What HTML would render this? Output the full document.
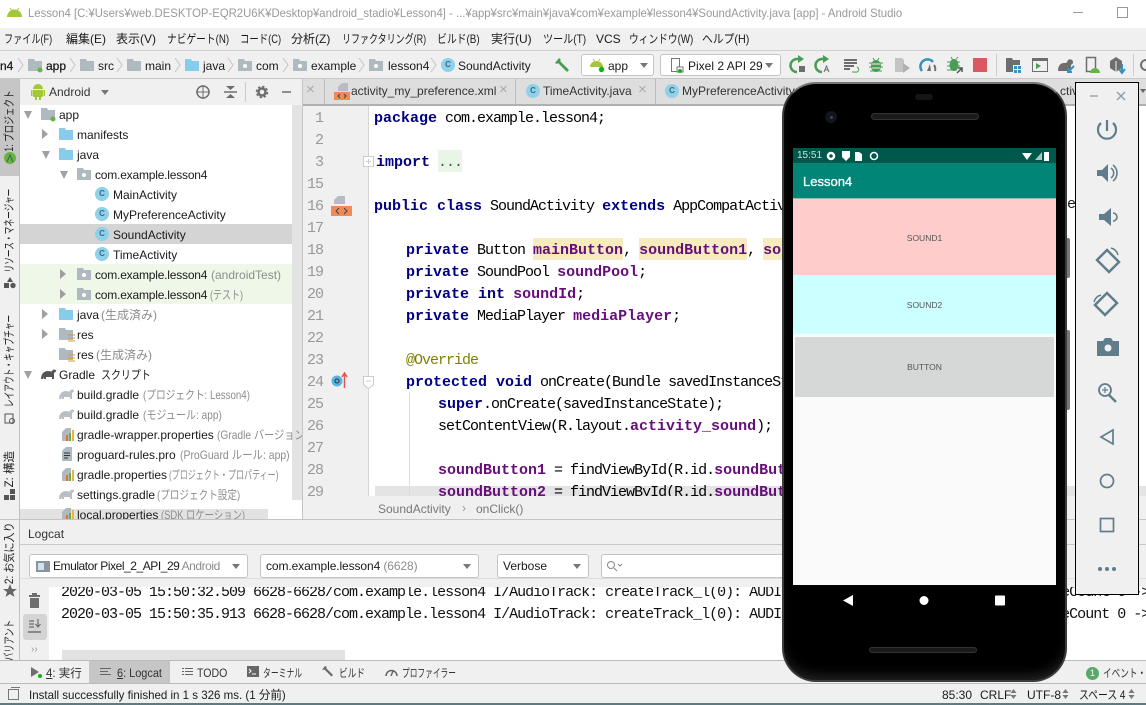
<!DOCTYPE html>
<html><head><meta charset="utf-8"><style>
html,body{margin:0;padding:0}
body{width:1146px;height:705px;overflow:hidden;position:relative;background:#f0f0f0;font:12px/16px "Liberation Sans","Noto Sans CJK JP",sans-serif;color:#1a1a1a}
.a,.t,svg.i,.b{position:absolute}
.t{white-space:nowrap;transform-origin:0 50%}
.g{color:#8c8c8c}
.c{position:absolute;width:14px;height:14px;border-radius:50%;background:#8fd0ea;color:#3d6a80;font:bold 8px/14px "Liberation Sans",sans-serif;text-align:center;font-style:normal}
.v{position:absolute;writing-mode:vertical-rl;text-orientation:sideways;white-space:nowrap;font-size:11.5px;line-height:14px;color:#222;left:3px}
.ln{position:absolute;width:30px;left:293px;text-align:right;font:15px/22px "Liberation Mono",monospace;letter-spacing:-1px;color:#999}
.cd{position:absolute;left:374px;white-space:pre;font:15px/22px "Liberation Mono",monospace;letter-spacing:-1px;color:#000}
.cd b{color:#000080;letter-spacing:0}
.cd u{text-decoration:none;color:#660e7a;font-weight:bold;letter-spacing:0}
.cd em{font-style:normal;background:#f6ebbc;display:inline-block;height:20px;box-shadow:0 -2px 0 #f6ebbc}
.lg{position:absolute;left:61px;white-space:pre;font:15px/22px "Liberation Mono",monospace;letter-spacing:-1px;color:#111}
.cb{position:absolute;background:#fff;border:1px solid #c4c4c4;border-radius:3px;box-sizing:border-box}
.tri{position:absolute;width:0;height:0;border-left:4px solid transparent;border-right:4px solid transparent;border-top:5px solid #777}
.m{top:31px}
.w{font-size:11.5px;color:#333;top:666px}
.sb{-webkit-text-stroke:.25px #1a1a1a}
</style></head><body>
<svg width="0" height="0" style="position:absolute"><defs>
<symbol id="fo" viewBox="0 0 14 12"><path d="M0 0h6l1 2h7v10H0z" fill="#aeb9c0"/></symbol>
<symbol id="fb" viewBox="0 0 14 12"><path d="M0 0h6l1 2h7v10H0z" fill="#87cdeb"/></symbol>
<symbol id="pk" viewBox="0 0 14 12"><path d="M0 0h6l1 2h7v10H0z" fill="#aeb9c0"/><circle cx="7" cy="7" r="2" fill="#fff"/></symbol>
<symbol id="el" viewBox="0 0 15 12"><path d="M0 11C0 6 3 3 7 3c2 0 3 1 4 0 1-2 4-2 4 0 0 1-1 1-2 2v6h-2V9H5v2H3V9l-1 2z"/></symbol>
<symbol id="pr" viewBox="0 0 14 14"><path d="M1 14V5l4-4h5v13z" fill="#aeb9c0"/><path d="M5 8h2v6H5z" fill="#e8702a"/><path d="M8 6h2v8H8z" fill="#62b543"/><path d="M11 3h2v11h-2z" fill="#f4af3d"/></symbol>
<symbol id="ud" viewBox="0 0 7 10"><path d="M3.500 0l3 4h-6zM3.500 10l3-4h-6z" fill="#777"/></symbol>
</defs></svg>

<!-- title -->
<div class="a" style="left:0;top:0;width:1146px;height:28px;background:#fff"></div>
<svg class="i" style="left:6px;top:7px" width="17" height="11" viewBox="0 0 17 11"><path d="M1 10a7.500 7.500 0 0 1 15 0z" fill="#a4c639"/><path d="M4 1l2 3M13 1l-2 3" stroke="#a4c639"/></svg>
<div class="t" style="left:28px;top:5px;color:#999;transform:scaleX(.944)">Lesson4 [C:¥Users¥web.DESKTOP-EQR2U6K¥Desktop¥android_stadio¥Lesson4] - ...¥app¥src¥main¥java¥com¥example¥lesson4¥SoundActivity.java [app] - Android Studio</div>
<div class="a" style="left:1073px;top:12px;width:10px;height:1px;background:#999"></div>
<div class="a" style="left:1117px;top:7px;width:9px;height:9px;border:1px solid #999"></div>

<!-- menu -->
<div class="t m" style="left:4px;transform:scaleX(.76)">ファイル(F)</div><div class="t m" style="left:66px">編集(E)</div><div class="t m" style="left:116px">表示(V)</div><div class="t m" style="left:167px;transform:scaleX(.81)">ナビゲート(N)</div><div class="t m" style="left:240px;transform:scaleX(.78)">コード(C)</div><div class="t m" style="left:291px">分析(Z)</div><div class="t m" style="left:342px;transform:scaleX(.75)">リファクタリング(R)</div><div class="t m" style="left:437px;transform:scaleX(.82)">ビルド(B)</div><div class="t m" style="left:491px">実行(U)</div><div class="t m" style="left:543px;transform:scaleX(.84)">ツール(T)</div><div class="t m" style="left:596px">VCS</div><div class="t m" style="left:629px;transform:scaleX(.81)">ウィンドウ(W)</div><div class="t m" style="left:702px;transform:scaleX(.9)">ヘルプ(H)</div>
<div class="a" style="left:0;top:50px;width:1146px;height:1px;background:#d0d0d0"></div>

<!-- breadcrumbs -->
<div class="t sb" style="left:0;top:58px">n4</div>
<svg class="i" style="left:28px;top:59px" width="14" height="12"><use href="#fo"/></svg><svg class="i" style="left:37px;top:67px" width="6" height="6"><circle cx="3" cy="3" r="2.500" fill="#62b543"/></svg>
<div class="t sb" style="left:46px;top:58px">app</div>
<svg class="i" style="left:80px;top:59px" width="14" height="12"><use href="#fo"/></svg><div class="t" style="left:98px;top:58px">src</div>
<svg class="i" style="left:127px;top:59px" width="14" height="12"><use href="#fo"/></svg><div class="t" style="left:145px;top:58px">main</div>
<svg class="i" style="left:185px;top:59px" width="14" height="12"><use href="#fb"/></svg><div class="t" style="left:203px;top:58px">java</div>
<svg class="i" style="left:238px;top:59px" width="14" height="12"><use href="#pk"/></svg><div class="t" style="left:256px;top:58px">com</div>
<svg class="i" style="left:293px;top:59px" width="14" height="12"><use href="#pk"/></svg><div class="t" style="left:311px;top:58px">example</div>
<svg class="i" style="left:369px;top:59px" width="14" height="12"><use href="#pk"/></svg><div class="t" style="left:388px;top:58px">lesson4</div>
<i class="c" style="left:441px;top:58px">C</i><div class="t" style="left:458px;top:58px">SoundActivity</div>
<svg class="i" style="left:17px;top:56px" width="420" height="18" fill="none" stroke="#c4c4c4"><path d="M1 2l5 7-5 7M53 2l5 7-5 7M100 2l5 7-5 7M158 2l5 7-5 7M211 2l5 7-5 7M266 2l5 7-5 7M342 2l5 7-5 7M414 2l5 7-5 7"/></svg>
<svg class="i" style="left:554px;top:57px" width="17" height="16"><path d="M1 6l4-5 2 2-1 1 9 9-2 2-9-9-1 1z" fill="#499c54"/></svg>
<div class="cb" style="left:581px;top:54px;width:73px;height:22px"></div>
<svg class="i" style="left:590px;top:58px" width="15" height="15"><path d="M0 9a6.500 6 0 0 1 13 0z" fill="#a4c639"/><path d="M3 1l1.500 2M10 1L8.500 3" stroke="#a4c639"/><circle cx="11.500" cy="11.500" r="2.700" fill="#0cb50c"/></svg>
<div class="t" style="left:608px;top:58px">app</div><div class="tri" style="left:640px;top:63px"></div>
<div class="cb" style="left:660px;top:54px;width:121px;height:22px"></div>
<svg class="i" style="left:670px;top:57px" width="14" height="17" fill="none" stroke="#777"><rect x="1.500" y="1.500" width="8" height="13"/><rect x="7" y="10" width="6" height="5" fill="#fff"/><circle cx="10" cy="14" r="2" fill="#0cb50c" stroke="none"/></svg>
<div class="t" style="left:688px;top:58px">Pixel 2 API 29</div><div class="tri" style="left:765px;top:63px"></div>

<!-- toolbar icons: each group centred on its reference x, y=65 -->
<svg class="i" style="left:780px;top:53px" width="366" height="24" fill="none">
<g transform="translate(18 12)"><path d="M-1 7a6.500 6.500 0 0 1 0-13h2" stroke="#499c54" stroke-width="2.500"/><path d="M0-10l6 4-6 4z" fill="#499c54"/><rect x="1" y="1" width="6" height="6" fill="#6e6e6e"/></g>
<g transform="translate(43 12)"><path d="M-1 7a6.500 6.500 0 0 1 0-13h2" stroke="#499c54" stroke-width="2.500"/><path d="M0-10l6 4-6 4z" fill="#499c54"/><path d="M1 7l2.500-6 2.500 6M2 5h3" stroke="#6e6e6e"/></g>
<g transform="translate(71 12)"><path d="M-7-5h13M-7-2h13M-7 1h10M-7 4h6" stroke="#6e6e6e" stroke-width="2"/><path d="M6 2a2.500 2.500 0 0 1-2 5H1" stroke="#499c54"/></g>
<g transform="translate(96 12)"><ellipse rx="5" ry="6" cy="1" fill="#499c54"/><path d="M-7-2h14M-7 2h14M-6 6h12M-3-7l1.500 2.500M3-7L1.500-4.500" stroke="#499c54"/><path d="M-4-1h8M-4 3h8" stroke="#f0f0f0"/></g>
<g transform="translate(122 12)"><path d="M-7-7h7l2 2v12h-9z" fill="#c4c4c4"/><path d="M1-2l7 5-7 5z" fill="#b0b0b0"/></g>
<g transform="translate(148 12)"><path d="M-6 6A7 7 0 0 1 5-3" stroke="#3592c4" stroke-width="2.500"/><path d="M7 6a7 7 0 0 0-1-6" stroke="#6e6e6e" stroke-width="2"/><path d="M-1 6l3-7 1 7z" fill="#6e6e6e"/></g>
<g transform="translate(175 12)"><ellipse cx="-1" rx="4.500" ry="6" fill="#499c54"/><path d="M-8-3h13M-8 1h13M-8 5h10M-4-8l1.500 2.500M3-8L1-5.500" stroke="#499c54"/><path d="M2 8l5-5M3 3h4v4" stroke="#555" stroke-width="1.500"/></g>
<rect x="193" y="5" width="14" height="14" fill="#db5860"/>
<path d="M216.500 1v22" stroke="#ccc"/>
<g transform="translate(233 12)"><path d="M-7-7h6l1 2h7v12H-7z" fill="#6e6e6e"/><rect x="0" y="0" width="9" height="9" fill="#f0f0f0"/><path d="M1 1h3v3H1zM5 1h3v3H5zM1 5h3v3H1zM5 5h3v3H5z" fill="#3592c4"/></g>
<g transform="translate(260 12)"><rect x="-7.500" y="-6.500" width="15" height="13" stroke="#6e6e6e"/><path d="M-8-7H8v3H-8z" fill="#6e6e6e"/><path d="M-4-2l5 3-5 3z" fill="#499c54"/></g>
<g transform="translate(286 12)"><path d="M-8 6c0-6 3-8 6-8 2 0 3 0 4-3 1-1 5-1 5 2 0 2-1 2-2 3v6z" fill="#6e6e6e"/><path d="M8 1L2 7M2 3v4h4" stroke="#3592c4" stroke-width="2"/></g>
<g transform="translate(312 12)"><rect x="-5.500" y="-7.500" width="9" height="14" stroke="#6e6e6e" stroke-width="1.500"/><path d="M-2 8a5 5 0 0 1 10 0z" fill="#62b543"/></g>
<g transform="translate(337 12)"><path d="M-7-4l6-4 6 4v7l-6 4-6-4z" fill="#6e6e6e"/><path d="M-1-4V7" stroke="#f0f0f0"/><path d="M5-1v8M2 4l3 4 3-4" stroke="#3592c4" stroke-width="2"/></g>
<path d="M353.500 1v22" stroke="#ccc"/>
<circle cx="366" cy="12" r="5" stroke="#6e6e6e" stroke-width="2"/>
</svg>
<div class="a" style="left:0;top:78px;width:1146px;height:1px;background:#c8c8c8"></div>

<!-- left strip -->
<div class="a" style="left:0;top:79px;width:19px;height:97px;background:#c6c6c6"></div>
<div class="a" style="left:19px;top:79px;width:1px;height:581px;background:#c0c0c0"></div>
<div class="v" style="top:80px;transform:rotate(180deg) scaleY(.75)">1: プロジェクト</div>
<svg class="i" style="left:3px;top:151px" width="14" height="14"><circle cx="7" cy="7" r="6" fill="#62b543"/><path d="M4 11l3-7 3 7" stroke="#555" fill="none"/></svg>
<div class="v" style="top:168px;transform:rotate(180deg) scaleY(.67)">リソース・マネージャー</div>
<svg class="i" style="left:4px;top:277px" width="12" height="12" fill="#555"><path d="M6 0l3 5H3z"/><rect x="0" y="6" width="5" height="5"/><circle cx="9" cy="8.500" r="2.700"/></svg>
<div class="v" style="top:292px;transform:rotate(180deg) scaleY(.67)">レイアウト・キャプチャー</div>
<svg class="i" style="left:4px;top:413px" width="12" height="12" fill="none" stroke="#555"><rect x="1" y="1" width="8" height="9"/><circle cx="8" cy="8" r="2.500"/></svg>
<div class="v" style="top:451px;transform:rotate(180deg)">Z: 構造</div>
<svg class="i" style="left:4px;top:489px" width="12" height="12" fill="#555"><rect x="0" y="6" width="5" height="5"/><rect x="6" y="6" width="5" height="5"/><rect x="6" y="0" width="5" height="5"/></svg>
<div class="v" style="top:518px;transform:rotate(180deg) scaleY(.88)">2: お気に入り</div>
<svg class="i" style="left:3px;top:584px" width="14" height="13"><path d="M7 0l2 5h5l-4 3 1.500 5L7 10l-4.500 3L4 8 0 5h5z" fill="#666"/></svg>
<div class="v" style="top:612px;transform:rotate(180deg) scaleY(.72)">バリアント</div>
<div class="a" style="left:0;top:660px;width:20px;height:23px;background:#f0f0f0"></div>

<!-- project panel header -->
<div class="a" style="left:20px;top:79px;width:283px;height:26px;background:#f0f0f0"></div>
<svg class="i" style="left:31px;top:83px" width="14" height="17" fill="#a4c639"><path d="M2 6a5 5 0 0 1 10 0z"/><rect x="2" y="7" width="10" height="7" rx="1"/><rect x="0" y="7" width="1.500" height="6"/><rect x="12.500" y="7" width="1.500" height="6"/><rect x="4" y="14" width="2" height="3"/><rect x="8" y="14" width="2" height="3"/></svg>
<div class="t" style="left:49px;top:84px;color:#333">Android</div><div class="tri" style="left:101px;top:90px"></div>
<svg class="i" style="left:195px;top:83px" width="96" height="18" fill="none" stroke="#6e6e6e" stroke-width="1.500">
<circle cx="8" cy="9" r="6"/><path d="M8 2v14M1 9h14" stroke-width="1"/><path d="M29 9h13"/><path d="M31 3h9l-4.500 4zM31 15h9l-4.500-4z" fill="#6e6e6e" stroke="none"/>
<circle cx="67" cy="9" r="3.500" stroke-width="2.500"/><circle cx="67" cy="9" r="5.500" stroke-width="1.500" stroke-dasharray="2.500 1.800"/><path d="M87 9h12"/>
</svg>
<div class="a" style="left:245px;top:82px;width:1px;height:20px;background:#ccc"></div>

<!-- tree -->
<div class="a" style="left:20px;top:105px;width:282px;height:414px;background:#fff;overflow:hidden" id="tree">
<div class="a" style="left:0;top:119px;width:282px;height:20px;background:#d4d4d4"></div>
<div class="a" style="left:0;top:159px;width:282px;height:40px;background:#eff7e8"></div>
<div class="a" style="left:272px;top:0;width:10px;height:395px;background:#e3e3e3"></div>
<div class="a" style="left:0;top:404px;width:248px;height:10px;background:#e2e2e2"></div>
<svg class="i" style="left:0;top:0" width="60" height="300" fill="#a0a0a0"><path d="M4 6h8l-4 8zM22 24l6 5-6 5zM22 46h8l-4 8zM40 66h8l-4 8zM40 164l6 5-6 5zM40 184l6 5-6 5zM22 204l6 5-6 5zM22 224l6 5-6 5zM4 266h8l-4 8z"/></svg>
<svg class="i" style="left:21px;top:3px" width="14" height="12"><use href="#fo"/></svg><svg class="i" style="left:30px;top:11px" width="6" height="6"><circle cx="3" cy="3" r="2.500" fill="#62b543"/></svg><div class="t" style="left:39px;top:2px">app</div>
<svg class="i" style="left:39px;top:23px" width="14" height="12"><use href="#fb"/></svg><div class="t" style="left:57px;top:22px">manifests</div>
<svg class="i" style="left:39px;top:43px" width="14" height="12"><use href="#fb"/></svg><div class="t" style="left:57px;top:42px">java</div>
<svg class="i" style="left:57px;top:63px" width="14" height="12"><use href="#pk"/></svg><div class="t" style="left:75px;top:62px;letter-spacing:-.2px">com.example.lesson4</div>
<i class="c" style="left:75px;top:82px">C</i><div class="t" style="left:93px;top:82px">MainActivity</div>
<i class="c" style="left:75px;top:102px">C</i><div class="t" style="left:93px;top:102px">MyPreferenceActivity</div>
<i class="c" style="left:75px;top:122px">C</i><div class="t" style="left:93px;top:122px">SoundActivity</div>
<i class="c" style="left:75px;top:142px">C</i><div class="t" style="left:93px;top:142px">TimeActivity</div>
<svg class="i" style="left:57px;top:163px" width="14" height="12"><use href="#pk"/></svg><div class="t" style="left:75px;top:162px;letter-spacing:-.2px">com.example.lesson4</div><div class="t g" style="left:191px;top:162px">(androidTest)</div>
<svg class="i" style="left:57px;top:183px" width="14" height="12"><use href="#pk"/></svg><div class="t" style="left:75px;top:182px;letter-spacing:-.2px">com.example.lesson4</div><div class="t g" style="left:190px;top:182px;transform:scaleX(.75)">(テスト)</div>
<svg class="i" style="left:39px;top:203px" width="14" height="12"><use href="#fb"/></svg><div class="t" style="left:57px;top:202px">java</div><div class="t g" style="left:81px;top:202px">(生成済み)</div>
<svg class="i" style="left:39px;top:223px" width="14" height="12"><use href="#fo"/></svg><svg class="i" style="left:48px;top:229px" width="7" height="8"><path d="M0 1h7M0 4h7M0 7h7" stroke="#d49a3c"/></svg><div class="t" style="left:57px;top:222px">res</div>
<svg class="i" style="left:39px;top:243px" width="14" height="12"><use href="#fo"/></svg><svg class="i" style="left:48px;top:249px" width="7" height="8"><path d="M0 1h7M0 4h7M0 7h7" stroke="#d49a3c"/></svg><div class="t" style="left:57px;top:242px">res</div><div class="t g" style="left:76px;top:242px">(生成済み)</div>
<svg class="i" style="left:21px;top:263px;fill:#555" width="15" height="12"><use href="#el"/></svg><div class="t" style="left:39px;top:262px">Gradle</div><div class="t" style="left:81px;top:262px;transform:scaleX(.83)">スクリプト</div>
<svg class="i" style="left:39px;top:283px;fill:#b8c0c5" width="15" height="12"><use href="#el"/></svg><div class="t" style="left:57px;top:282px">build.gradle</div><div class="t g" style="left:123px;top:282px;transform:scaleX(.81)">(プロジェクト: Lesson4)</div>
<svg class="i" style="left:39px;top:303px;fill:#b8c0c5" width="15" height="12"><use href="#el"/></svg><div class="t" style="left:57px;top:302px">build.gradle</div><div class="t g" style="left:123px;top:302px;transform:scaleX(.84)">(モジュール: app)</div>
<svg class="i" style="left:41px;top:322px" width="14" height="14"><use href="#pr"/></svg><div class="t" style="left:57px;top:322px">gradle-wrapper.properties</div><div class="t g" style="left:197px;top:322px;transform:scaleX(.85)">(Gradle バージョン</div>
<svg class="i" style="left:41px;top:342px" width="12" height="14"><path d="M1 14V4l4-4h6v14z" fill="#aeb9c0"/><path d="M3 6h6M3 8.500h6M3 11h4" stroke="#333"/></svg><div class="t" style="left:57px;top:342px">proguard-rules.pro</div><div class="t g" style="left:160px;top:342px;transform:scaleX(.87)">(ProGuard ルール: app)</div>
<svg class="i" style="left:41px;top:362px" width="14" height="14"><use href="#pr"/></svg><div class="t" style="left:57px;top:362px">gradle.properties</div><div class="t g" style="left:149px;top:362px;transform:scaleX(.67)">(プロジェクト・プロパティー)</div>
<svg class="i" style="left:39px;top:383px;fill:#b8c0c5" width="15" height="12"><use href="#el"/></svg><div class="t" style="left:57px;top:382px">settings.gradle</div><div class="t g" style="left:137px;top:382px;transform:scaleX(.8)">(プロジェクト設定)</div>
<svg class="i" style="left:41px;top:402px" width="14" height="14"><use href="#pr"/></svg><div class="t" style="left:57px;top:402px">local.properties</div><div class="t g" style="left:141px;top:402px;transform:scaleX(.78)">(SDK ロケーション)</div>
</div>
<div class="a" style="left:302px;top:79px;width:1px;height:440px;background:#c4c4c4"></div>

<!-- tabs -->
<div class="a" style="left:303px;top:79px;width:843px;height:25px;background:#dedede"></div>
<div class="a" style="left:303px;top:104px;width:843px;height:2px;background:#b0b0b0"></div>
<div class="a" style="left:324px;top:79px;width:1px;height:25px;background:#bbb"></div><div class="a" style="left:515px;top:79px;width:1px;height:25px;background:#bbb"></div><div class="a" style="left:655px;top:79px;width:1px;height:25px;background:#bbb"></div>
<div class="t" style="left:306px;top:82px;color:#aaa;font-size:15px">×</div>
<svg class="i" style="left:334px;top:83px" width="16" height="18"><path d="M4 8V4l4-4h6v8z" fill="#b5bdc2"/><rect y="9" width="16" height="8" fill="#ee8b58"/><path d="M6 11l-2 2 2 2M10 11l2 2-2 2" stroke="#444" fill="none"/></svg>
<div class="t" style="left:351px;top:83px;color:#333">activity_my_preference.xml</div><div class="t" style="left:499px;top:82px;color:#aaa;font-size:15px">×</div>
<i class="c" style="left:526px;top:84px">C</i><div class="t" style="left:543px;top:83px;color:#333">TimeActivity.java</div><div class="t" style="left:638px;top:82px;color:#aaa;font-size:15px">×</div>
<i class="c" style="left:665px;top:84px">C</i><div class="t" style="left:682px;top:83px;color:#333">MyPreferenceActivity</div>
<div class="t" style="left:1060px;top:83px;color:#333">ctiv</div>
<div class="a" style="left:1140px;top:89px;border-left:3px solid transparent;border-right:3px solid transparent;border-top:4px solid #666"></div>

<!-- editor -->
<div class="a" style="left:303px;top:106px;width:65px;height:390px;background:#f0f0f0"></div>
<div class="a" style="left:368px;top:106px;width:1px;height:390px;background:#d4d4d4"></div>
<div class="a" style="left:369px;top:106px;width:777px;height:390px;background:#fff"></div>
<div class="a" style="left:375px;top:486px;width:771px;height:10px;background:#e4e4e4"></div>
<div class="a" style="left:409px;top:392px;width:1px;height:104px;background:#dcdcdc"></div>
<div class="a" style="top:108px;height:388px;overflow:hidden;left:0;width:1146px">
<div class="ln" style="top:0">1</div><div class="ln" style="top:22px">2</div><div class="ln" style="top:44px">3</div><div class="ln" style="top:66px">15</div><div class="ln" style="top:88px">16</div><div class="ln" style="top:110px">17</div><div class="ln" style="top:132px">18</div><div class="ln" style="top:154px">19</div><div class="ln" style="top:176px">20</div><div class="ln" style="top:198px">21</div><div class="ln" style="top:220px">22</div><div class="ln" style="top:242px">23</div><div class="ln" style="top:264px">24</div><div class="ln" style="top:286px">25</div><div class="ln" style="top:308px">26</div><div class="ln" style="top:330px">27</div><div class="ln" style="top:352px">28</div><div class="ln" style="top:374px">29</div>
<div class="cd" style="top:0"><b>package</b> com.example.lesson4;</div>
<div class="cd" style="top:44px;left:376px"><b>import</b> <span style="background:#e9f5e6;color:#555;display:inline-block;height:20px;box-shadow:0 -2px 0 #e9f5e6">...</span></div>
<div class="cd" style="top:88px"><b>public class</b> SoundActivity <b>extends</b> AppCompatActivity</div>
<div class="cd" style="top:132px">    <b>private</b> Button <em><u>mainButton</u></em>, <em><u>soundButton1</u></em>, <em><u>soundButton2</u></em></div>
<div class="cd" style="top:154px">    <b>private</b> SoundPool <u>soundPool</u>;</div>
<div class="cd" style="top:176px">    <b>private int</b> <u>soundId</u>;</div>
<div class="cd" style="top:198px">    <b>private</b> MediaPlayer <u>mediaPlayer</u>;</div>
<div class="cd" style="top:242px">    <span style="color:#808000">@Override</span></div>
<div class="cd" style="top:264px">    <b>protected void</b> onCreate(Bundle savedInstanceState) {</div>
<div class="cd" style="top:286px">        <b>super</b>.onCreate(savedInstanceState);</div>
<div class="cd" style="top:308px">        setContentView(R.layout.<u>activity_sound</u>);</div>
<div class="cd" style="top:352px">        <u>soundButton1</u> = findViewById(R.id.<u>soundButton1</u>);</div>
<div class="cd" style="top:374px">        <u>soundButton2</u> = findViewById(R.id.<u>soundButton2</u>);</div>
</div>
<svg class="i" style="left:363px;top:156px" width="12" height="12" fill="#fff" stroke="#ccc"><rect x=".5" y=".5" width="10" height="10"/><path d="M3 5.500h5M5.500 3v5"/></svg>
<svg class="i" style="left:363px;top:376px" width="12" height="14" fill="#fff" stroke="#ccc"><path d="M.5.5h10v8l-5 4-5-4z"/><path d="M3 5h5"/></svg>
<svg class="i" style="left:331px;top:195px" width="22" height="22"><path d="M3 9V5l4-4h7v8z" fill="#b5bdc2"/><rect y="11" width="21" height="10" fill="#ee8b58"/><path d="M8 13l-3 3 3 3M13 13l3 3-3 3" stroke="#444" fill="none"/></svg>
<svg class="i" style="left:331px;top:372px" width="17" height="17"><circle cx="6" cy="9" r="5.500" fill="#55b5e0"/><circle cx="6" cy="9" r="2" fill="none" stroke="#333"/><path d="M13.500 16V2M11 5l2.500-4 2.500 4" stroke="#e05555" fill="none" stroke-width="1.500"/></svg>

<!-- editor breadcrumb -->
<div class="a" style="left:303px;top:496px;width:843px;height:23px;background:#f0f0f0"></div>
<div class="t" style="left:378px;top:501px;color:#777">SoundActivity</div><div class="t" style="left:462px;top:500px;color:#999">›</div><div class="t" style="left:476px;top:501px;color:#777">onClick()</div>
<div class="a" style="left:0;top:519px;width:1146px;height:1px;background:#c4c4c4"></div>

<!-- logcat -->
<div class="t" style="left:28px;top:526px;color:#333">Logcat</div>
<div class="a" style="left:20px;top:544px;width:1126px;height:1px;background:#c8c8c8"></div>
<div class="cb" style="left:29px;top:554px;width:219px;height:24px"></div>
<svg class="i" style="left:36px;top:561px" width="14" height="11"><rect width="14" height="11" fill="#8a949a"/><rect x="2" y="2" width="6" height="7" fill="#cfe3ee"/></svg>
<div class="t" style="left:53px;top:558px;width:169px;overflow:hidden;letter-spacing:-.45px">Emulator Pixel_2_API_29 <span class="g">Android 10, API 29</span></div><div class="tri" style="left:232px;top:564px"></div>
<div class="cb" style="left:260px;top:554px;width:219px;height:24px"></div>
<div class="t" style="left:266px;top:558px;letter-spacing:-.1px">com.example.lesson4 <span class="g">(6628)</span></div><div class="tri" style="left:463px;top:564px"></div>
<div class="cb" style="left:497px;top:554px;width:92px;height:24px"></div>
<div class="t" style="left:503px;top:558px">Verbose</div><div class="tri" style="left:573px;top:564px"></div>
<div class="cb" style="left:601px;top:554px;width:250px;height:24px"></div>
<svg class="i" style="left:606px;top:560px" width="18" height="12" fill="none" stroke="#888"><circle cx="5" cy="5" r="3.500"/><path d="M8 8l3 3M12 4l2 2 2-2"/></svg>
<div class="a" style="left:20px;top:578px;width:1126px;height:1px;background:#ddd"></div>
<div class="a" style="left:49px;top:587px;width:1097px;height:73px;background:#fff;overflow:hidden">
<div class="lg" style="left:12px;top:-5px">2020-03-05 15:50:32.509 6628-6628/com.example.lesson4 I/AudioTrack: createTrack_l(0): AUDIO_OUTPUT_FLAG_FAST successful; frameCount 0 -&gt;</div>
<div class="lg" style="left:12px;top:17px">2020-03-05 15:50:35.913 6628-6628/com.example.lesson4 I/AudioTrack: createTrack_l(0): AUDIO_OUTPUT_FLAG_FAST successful; frameCount 0 -&gt;</div>
<div class="a" style="left:13px;top:63px;width:283px;height:10px;background:#e2e2e2"></div>
</div>
<svg class="i" style="left:28px;top:593px" width="14" height="16" fill="#6e6e6e"><rect x="1" y="2" width="11" height="2"/><rect x="4" y="0" width="5" height="2"/><path d="M2 5h9v10H2z"/></svg>
<div class="a" style="left:23px;top:614px;width:24px;height:26px;background:#d4d4d4;border-radius:3px"></div>
<svg class="i" style="left:28px;top:618px" width="14" height="16" fill="none" stroke="#6e6e6e"><path d="M0 14h13" stroke-width="1.500"/><path d="M10 1v8M7.500 6l2.500 3 2.500-3M1 3h5M1 6h5M1 9h5" stroke-width="1.200"/></svg>
<div class="t" style="left:31px;top:642px;color:#999;font-size:10px">››</div>

<!-- bottom tool bar -->
<div class="a" style="left:0;top:660px;width:1146px;height:1px;background:#bbb"></div>
<div class="a" style="left:89px;top:661px;width:81px;height:22px;background:#c6c6c6"></div>
<div class="a" style="left:0;top:683px;width:1146px;height:1px;background:#bbb"></div>
<svg class="i" style="left:30px;top:666px" width="15" height="13"><path d="M1 1l8 5-8 5z" fill="#6e6e6e"/><circle cx="10" cy="10" r="2" fill="#0cb50c"/></svg>
<div class="t w" style="left:46px"><u>4</u>: 実行</div>
<svg class="i" style="left:100px;top:667px" width="12" height="10" stroke="#666"><path d="M0 1.500h11M0 4.500h8M0 7.500h11"/></svg>
<div class="t w" style="left:117px;transform:scaleX(.95)"><u>6</u>: Logcat</div>
<svg class="i" style="left:182px;top:667px" width="11" height="10" stroke="#666"><path d="M0 1.500h2M3 1.500h8M0 4.500h2M3 4.500h8M0 7.500h2M3 7.500h8"/></svg>
<div class="t w" style="left:197px;transform:scaleX(.92)">TODO</div>
<svg class="i" style="left:247px;top:666px" width="12" height="11"><rect width="12" height="11" fill="#666"/><path d="M2 3l2 2-2 2M5 8h4" stroke="#fff" fill="none"/></svg>
<div class="t w" style="left:263px;transform:scaleX(.68)">ターミナル</div>
<svg class="i" style="left:322px;top:665px" width="13" height="12"><path d="M0 5l3-4 2 1-1 1 7 7-1.500 1.500-7-7z" fill="#666"/></svg>
<div class="t w" style="left:339px;transform:scaleX(.75)">ビルド</div>
<svg class="i" style="left:385px;top:667px" width="13" height="9" fill="none" stroke="#666" stroke-width="1.500"><path d="M1 9a5.500 5.500 0 0 1 11 0M6 9l2-5"/></svg>
<div class="t w" style="left:402px;transform:scaleX(.67)">プロファイラー</div>
<svg class="i" style="left:1086px;top:667px" width="13" height="13"><circle cx="6.500" cy="6.500" r="6.500" fill="#5aa86a"/></svg>
<div class="t" style="left:1090px;top:667px;color:#fff;font-size:9px;line-height:13px">1</div>
<div class="t w" style="left:1103px;transform:scaleX(.75)">イベント・ログ</div>

<!-- status -->
<div class="a" style="left:8px;top:689px;width:9px;height:9px;border:1px solid #777"></div><div class="a" style="left:11px;top:687px;width:9px;height:1px;background:#777"></div>
<div class="t" style="left:29px;top:687px;transform:scaleX(.96)">Install successfully finished in 1 s 326 ms. (1 分前)</div>
<div class="t" style="left:942px;top:687px">85:30</div>
<div class="t" style="left:980px;top:687px">CRLF</div><svg class="i" style="left:1010px;top:689px" width="7" height="10"><use href="#ud"/></svg>
<div class="t" style="left:1027px;top:687px">UTF-8</div><svg class="i" style="left:1062px;top:689px" width="7" height="10"><use href="#ud"/></svg>
<div class="t" style="left:1079px;top:687px;transform:scaleX(.82)">スペース 4</div><svg class="i" style="left:1128px;top:689px" width="7" height="10"><use href="#ud"/></svg>
<div class="a" style="left:0;top:703px;width:1146px;height:2px;background:#5e7a82"></div>

<div class="t" style="left:1067px;top:197px;font:15px/16px 'Liberation Mono',monospace">e</div>

<!-- phone -->
<div class="a" style="left:1067px;top:238px;width:3px;height:40px;background:#777;border-radius:0 2px 2px 0"></div>
<div class="a" style="left:1067px;top:330px;width:3px;height:80px;background:#777;border-radius:0 2px 2px 0"></div>
<div class="a" style="left:782px;top:82px;width:285px;height:600px;box-sizing:border-box;background:#000;border:2px solid #3c3c3c;border-top-color:#777;border-radius:34px;box-shadow:inset 0 -8px 12px -4px #262626"></div>
<div class="a" style="left:915px;top:94px;width:18px;height:6px;border-radius:3px;background:#151515"></div>
<div class="a" style="left:871px;top:113px;width:108px;height:7px;border-radius:4px;background:#1a1a1a;box-shadow:inset 0 0 0 1px #333"></div>
<div class="a" style="left:825px;top:111px;width:12px;height:12px;border-radius:50%;background:#14141c"></div>
<div class="a" style="left:830px;top:116px;width:3px;height:3px;border-radius:50%;background:#33427a"></div>
<div class="a" style="left:869px;top:647px;width:108px;height:6px;border-radius:4px;background:#1c1a18;box-shadow:inset 0 0 0 1px #333"></div>
<div class="a" style="left:793px;top:148px;width:263px;height:437px;background:#fafafa"></div>
<div class="a" style="left:793px;top:148px;width:263px;height:15px;background:#00574b"></div>
<div class="a" style="left:793px;top:163px;width:263px;height:35px;background:#008577"></div>
<div class="a" style="left:793px;top:198px;width:263px;height:1px;background:#9fb8b2"></div>
<div class="a" style="left:793px;top:199px;width:263px;height:76px;background:#ffcccc"></div>
<div class="a" style="left:793px;top:275px;width:263px;height:59px;background:#ccffff"></div>
<div class="a" style="left:795px;top:337px;width:259px;height:60px;background:#d6d7d7;border-radius:1px"></div>
<div class="t" style="left:797px;top:148px;color:#cfe0dc;font-size:10px">15:51</div>
<svg class="i" style="left:825px;top:150px" width="230" height="12" fill="#fff">
<circle cx="6" cy="6" r="3" fill="none" stroke="#fff" stroke-width="2.500"/><path d="M17 1h8v6l-4 4-4-4z"/><path d="M30 2h4l3 2v7h-7z"/><circle cx="49" cy="6" r="3.500" fill="none" stroke="#fff" stroke-width="1.500"/>
<path d="M197 3h10l-5 7z"/><path d="M217 2v8h-7z" fill="#a8c8c2"/><rect x="219" y="2" width="5" height="9"/></svg>
<div class="t" style="left:803px;top:174px;color:#fff;font-size:13px;-webkit-text-stroke:.3px #fff">Lesson4</div>
<div class="t" style="left:793px;width:263px;text-align:center;top:230px;font-size:8.500px;color:#555">SOUND1</div>
<div class="t" style="left:793px;width:263px;text-align:center;top:297px;font-size:8.500px;color:#555">SOUND2</div>
<div class="t" style="left:793px;width:263px;text-align:center;top:359px;font-size:8.500px;color:#555">BUTTON</div>
<svg class="i" style="left:840px;top:594px" width="170" height="13" fill="#fff"><path d="M3 6.500L13 1v11z"/><circle cx="84" cy="6.500" r="4.500"/><rect x="155" y="1.500" width="10" height="10" rx="1"/></svg>

<!-- emulator side panel -->
<div class="a" style="left:1075px;top:82px;width:64px;height:513px;box-sizing:border-box;background:#f0f0f0;border:1px solid #000"></div>
<svg class="i" style="left:1076px;top:83px" width="62" height="511" fill="none" stroke="#607d8b" stroke-width="2">
<path d="M14 13h8M41 9l8 8M49 9l-8 8" stroke="#8a9ba5" stroke-width="1.300"/>
<path d="M31 37v11" stroke-width="2.200"/><path d="M25 40a9 9 0 1 0 12 0" stroke-width="2.200"/>
<path d="M21 87h5l6-6v18l-6-6h-5z" fill="#607d8b" stroke="none"/><path d="M35 85a6 6 0 0 1 0 10M37 82a10 10 0 0 1 0 16" stroke-width="1.600"/>
<path d="M23 131h5l7-6v18l-7-6h-5z" fill="#607d8b" stroke="none"/><path d="M37 130a4 4 0 0 1 0 8" stroke-width="1.600"/>
<path d="M31 167l12 12-10 10-12-12z" stroke-width="2.500"/><path d="M35 165a10 10 0 0 1 7 7" stroke-width="1.500"/>
<path d="M31 210l-12 12 10 10 12-12z" stroke-width="2.500"/><path d="M25 212a10 10 0 0 0-7 7" stroke-width="1.500"/>
<path d="M21 258h6l2-3h6l2 3h6v15H21z" fill="#607d8b" stroke="none"/><circle cx="32" cy="265" r="3.500" fill="#f0f0f0" stroke="none"/>
<circle cx="29" cy="307" r="6" stroke-width="1.800"/><path d="M33 312l7 7" stroke-width="2.500"/><path d="M26 307h6M29 304v6" stroke-width="1.200"/>
<path d="M37 347v14l-12-7z" stroke-width="1.700"/>
<circle cx="31" cy="398" r="6.500" stroke-width="1.700"/>
<rect x="24.500" y="435.500" width="13" height="13" stroke-width="1.700"/>
<circle cx="24" cy="486" r="2" fill="#607d8b" stroke="none"/><circle cx="31" cy="486" r="2" fill="#607d8b" stroke="none"/><circle cx="38" cy="486" r="2" fill="#607d8b" stroke="none"/>
</svg>
</body></html>
